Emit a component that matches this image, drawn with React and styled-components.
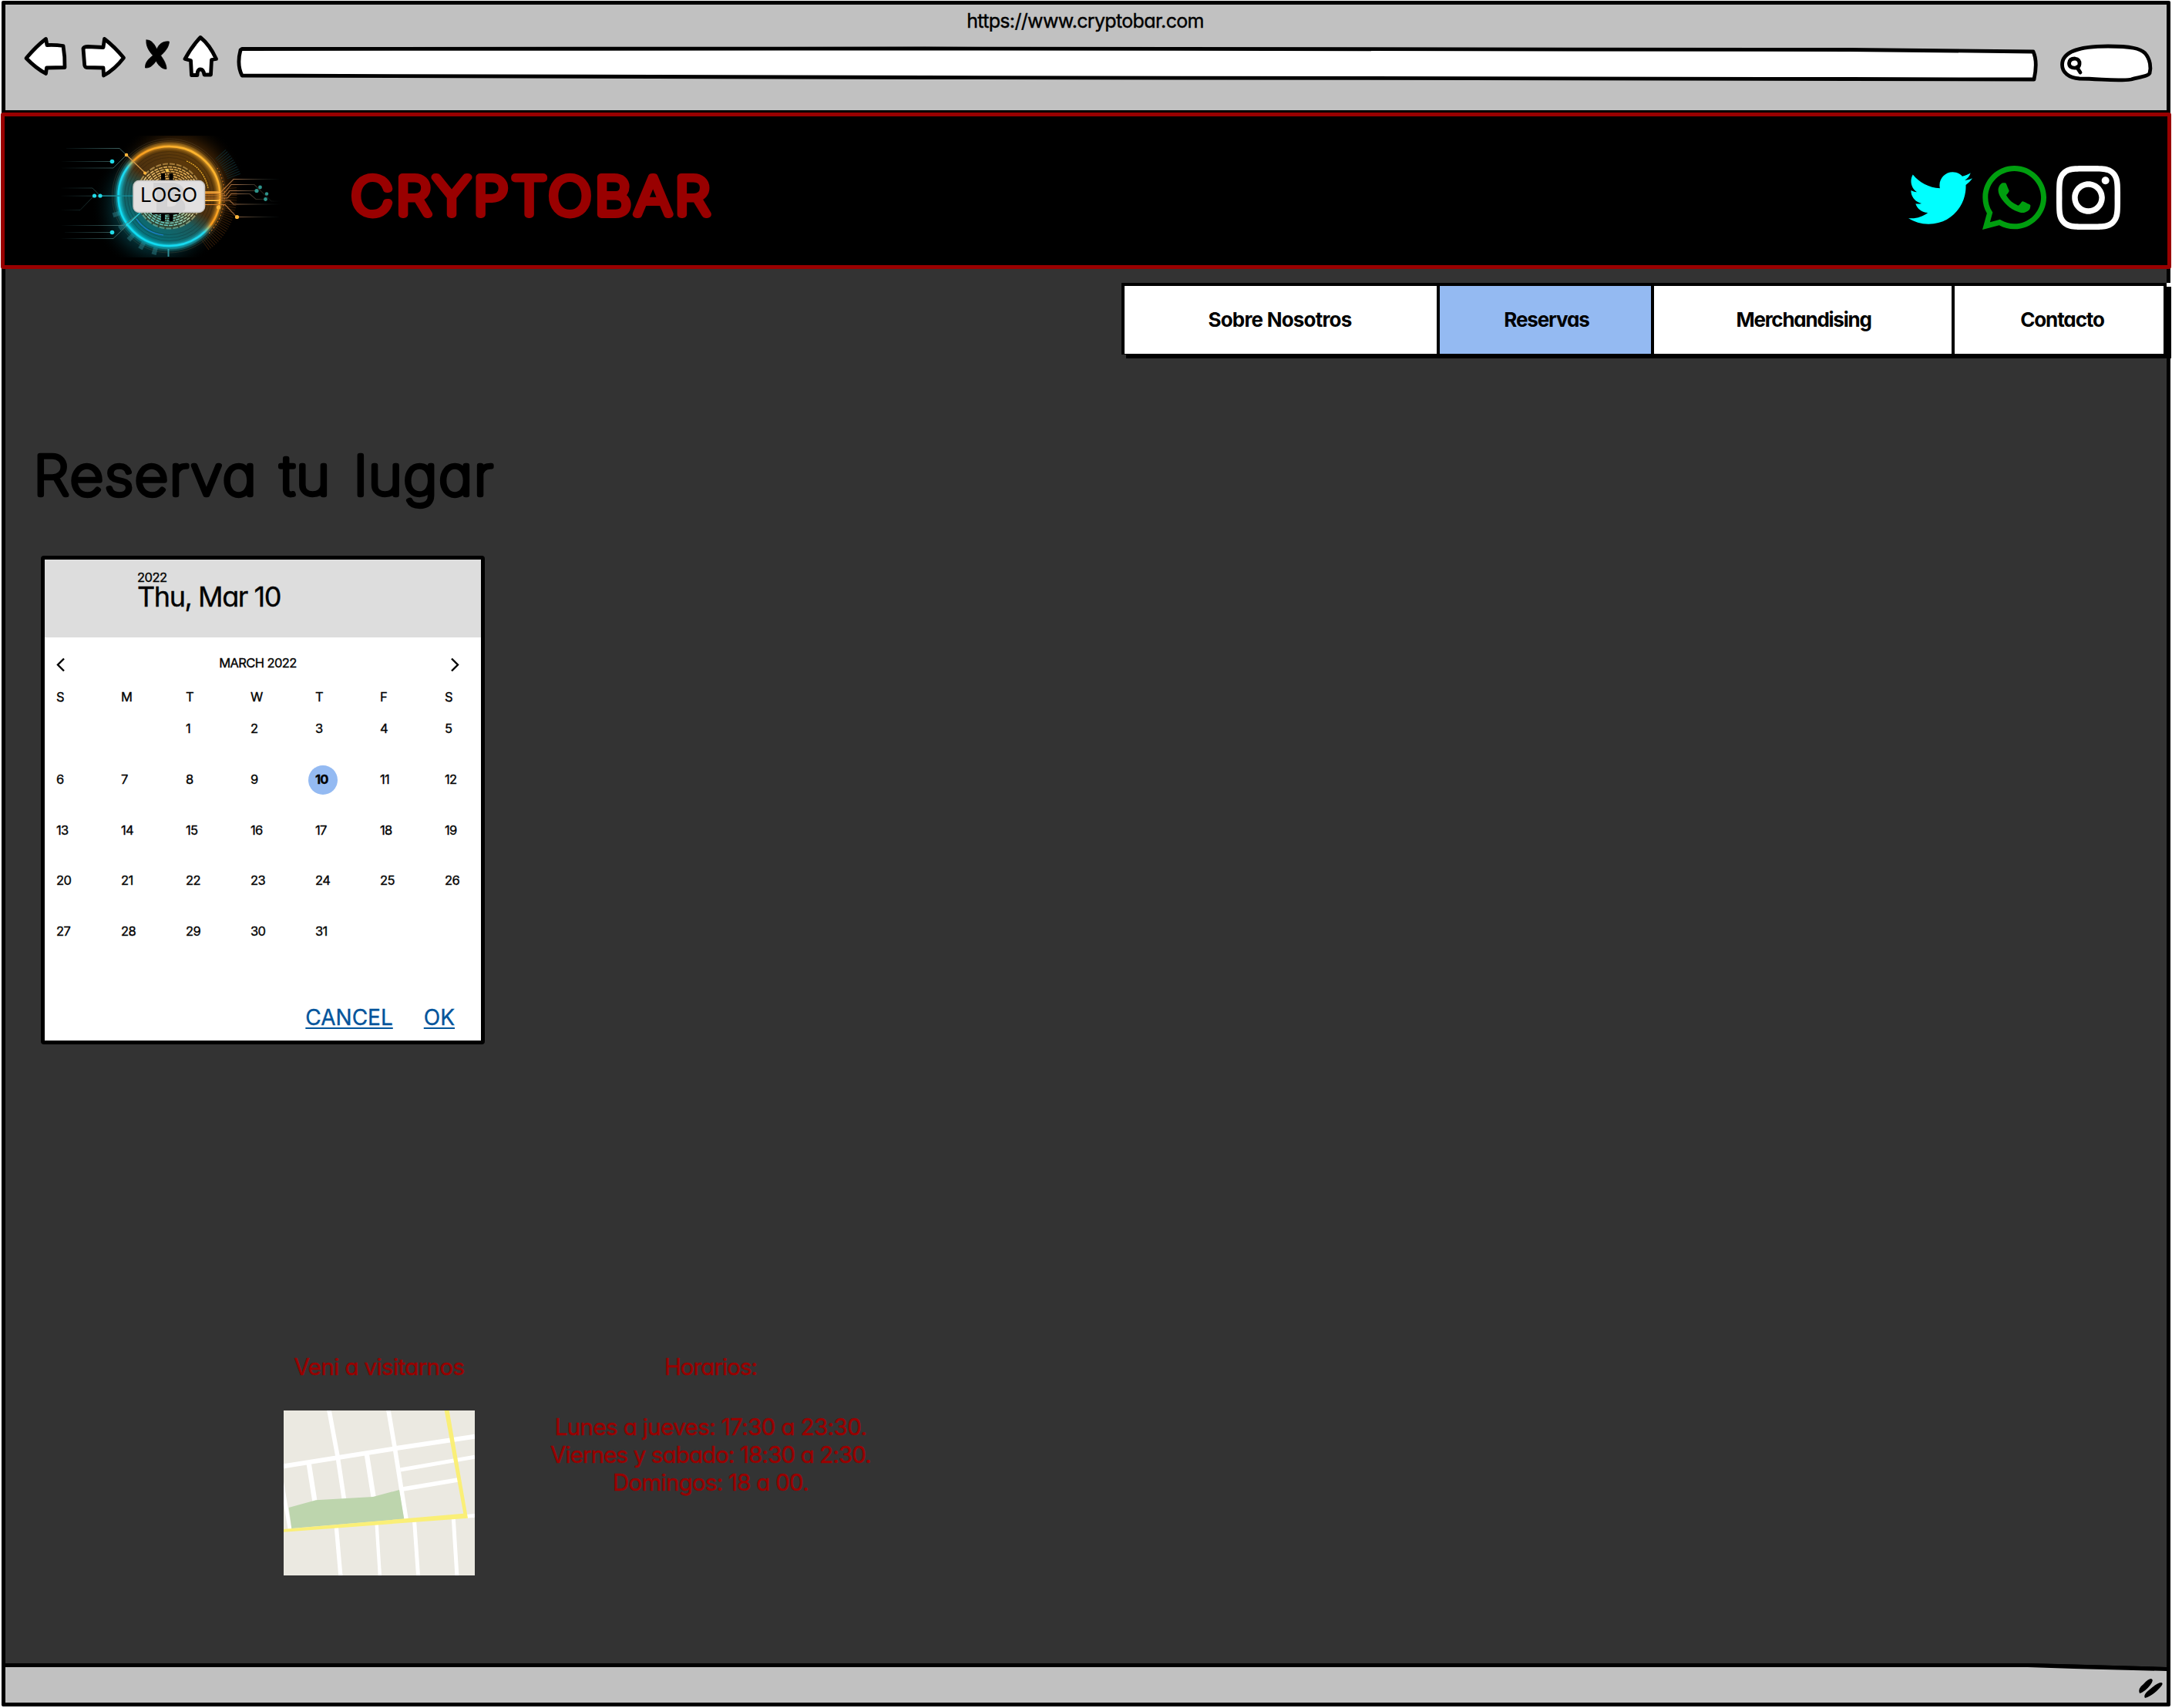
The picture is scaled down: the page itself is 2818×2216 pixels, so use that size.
import React from "react";
import styled, { createGlobalStyle } from "styled-components";
import { FaTwitter, FaWhatsapp, FaInstagram } from "react-icons/fa";

const GlobalStyle = createGlobalStyle`
  * { box-sizing: border-box; }
  body {
    margin: 0;
    background: #fff;
    color: #000;
    font-family: Inter, "Liberation Sans", sans-serif;
    font-feature-settings: "cv11";
  }
`;

const Page = styled.div`
  width: 2818px;
  height: 2216px;
  padding: 1px 2px 2px;
  overflow: hidden;
`;

const Window = styled.div`
  display: flex;
  flex-direction: column;
  height: 2213px;
  border: 5px solid #000;
  border-radius: 2px;
  background: #333;
`;

const BrowserBar = styled.div`
  flex: none;
  height: 140px;
  background: #c1c1c1;
  border-bottom: 3px solid #000;
`;

const Address = styled.div`
  height: 38px;
  padding: 6px 2px 0 0;
  font-size: 25px;
  line-height: 30px;
  letter-spacing: -0.66px;
  -webkit-text-stroke: 0.4px #000;
  text-align: center;
`;

const Controls = styled.div`
  display: flex;
  padding-left: 21px;
`;

const Sketch = styled.svg`
  display: block;
  flex: none;
  fill: #fff;
  stroke: #000;
  stroke-width: 4.8;
  stroke-linejoin: round;
  stroke-linecap: round;
`;

const Header = styled.header`
  flex: none;
  display: flex;
  align-items: flex-start;
  height: 203px;
  margin: 0 -6px;
  padding: 19px 61px 0 70px;
  border: 5px solid #990000;
  border-radius: 3px;
  background: #000;
`;

const Drawing = styled.svg`
  display: block;
  flex: none;
`;

const Wordmark = styled.svg`
  display: block;
  flex: none;
  margin: ${(p) => p.$margin};
  fill: ${(p) => p.$color};
  stroke: ${(p) => p.$color};
  stroke-width: ${(p) => p.$stroke};
  stroke-linejoin: round;
  stroke-linecap: round;
  font-weight: 100;
  letter-spacing: ${(p) => p.$tracking}px;
  word-spacing: 6px;
  overflow: visible;
`;

const Social = styled.div`
  display: flex;
  align-items: center;
  gap: 13px;
  margin: 39px 0 0 auto;
`;

const SocialIcon = styled.span`
  display: flex;
  color: ${(p) => p.$color};
  svg {
    display: block;
    width: 83px;
    height: ${(p) => p.$height};
  }
`;

const Nav = styled.nav`
  flex: none;
  display: flex;
  align-self: flex-end;
  height: 93px;
  margin-top: 18px;
  border: solid #000;
  border-width: 4px 4px 1px;
  background: #fff;
  box-shadow: 6px 5px 0 #000, 6px 0 0 #fff;
`;

const NavItem = styled.a`
  display: flex;
  align-items: center;
  justify-content: center;
  width: ${(p) => p.$width}px;
  padding: 0 ${(p) => p.$right || 0}px 1px ${(p) => p.$left || 0}px;
  background: ${(p) => (p.$active ? "#94baf2" : "#fff")};
  font-size: 26px;
  font-weight: 700;
  line-height: 30px;
  letter-spacing: ${(p) => p.$tracking}px;
  & + & {
    border-left: 4px solid #000;
  }
`;

const Calendar = styled.section`
  flex: none;
  width: 576px;
  height: 634px;
  margin: 51px 0 0 46px;
  border: 5px solid #000;
  border-radius: 4px;
  background: #fff;
  -webkit-text-stroke: 0.35px currentColor;
`;

const CalendarHead = styled.div`
  height: 101px;
  padding: 15px 0 0 120px;
  background: #ddd;
`;

const Year = styled.div`
  font-size: 16.5px;
  line-height: 16px;
  letter-spacing: -0.5px;
`;

const Today = styled.div`
  font-size: 36px;
  line-height: 34px;
  letter-spacing: -1.45px;
`;

const MonthRow = styled.div`
  display: flex;
  justify-content: space-between;
  height: 24px;
  margin: 23px 26px 0 13px;
  font-size: 16.5px;
  line-height: 20px;
  letter-spacing: -0.6px;
`;

const Grid = styled.div`
  display: grid;
  grid-template-columns: repeat(7, 84px);
  grid-auto-rows: ${(p) => p.$row}px;
  width: 566px;
  padding-left: 15px;
  margin-top: ${(p) => p.$top}px;
  font-size: 16.5px;
  line-height: 20px;
`;

const Day = styled.span`
  position: relative;
  isolation: isolate;
  font-weight: ${(p) => (p.$selected ? 700 : 400)};
  letter-spacing: ${(p) => (p.$selected ? "-0.8px" : "-0.6px")};
  &::before {
    content: "";
    display: ${(p) => (p.$selected ? "block" : "none")};
    position: absolute;
    z-index: -1;
    left: -9.5px;
    top: -7.5px;
    width: 38px;
    height: 38px;
    border-radius: 50%;
    background: #94baf2;
  }
`;

const Actions = styled.div`
  display: flex;
  justify-content: flex-end;
  gap: 40px;
  margin-top: 41px;
  padding-right: 34px;
`;

const Action = styled.a`
  color: #03549b;
  font-size: 28px;
  line-height: 30px;
  text-decoration: underline;
  text-decoration-thickness: 2px;
  text-underline-offset: 3px;
  text-decoration-skip-ink: none;
`;

const Visit = styled.footer`
  flex: none;
  display: flex;
  gap: 96px;
  margin: 400px 0 0 361px;
  color: #990000;
  font-size: 29.5px;
  line-height: 36px;
  text-align: center;
  -webkit-text-stroke: 0.5px #990000;
`;

const Column = styled.div`
  width: ${(p) => p.$width}px;
`;

const ColumnTitle = styled.div`
  margin-bottom: ${(p) => p.$gap}px;
  letter-spacing: ${(p) => p.$tracking}px;
`;

const Hours = styled.div`
  white-space: nowrap;
  letter-spacing: ${(p) => p.$tracking}px;
`;

const StatusBar = styled.div`
  position: relative;
  flex: none;
  height: 51px;
  margin-top: auto;
  border-top: 5px solid #000;
  background: #c1c1c1;
`;

const Corner = styled.svg`
  position: absolute;
  right: 0;
  top: -5px;
  display: block;
`;

const DAYS = ["", "", ...Array.from({ length: 31 }, (_, i) => String(i + 1))];
const WEEKDAYS = ["S", "M", "T", "W", "T", "F", "S"];

const HOURS = [
  ["Lunes a jueves: 17:30 a 23:30.", -0.6],
  ["Viernes y sabado: 18:30 a 2:30.", -0.88],
  ["Domingos: 18 a 00.", -0.75],
];

function BrowserControls() {
  return (
    <Controls>
      <Sketch width="69" height="66" viewBox="28 44 69 66">
        <path d="M34 75.5 Q47 60 59.5 50.500 L61 58.500 Q72 58 82 59.500 Q84.500 74 84 87.500 L60.500 88 L59.500 95.500 Q46 88 34 75.500Z" />
      </Sketch>
      <Sketch width="78" height="66" viewBox="97 44 78 66">
        <path d="M108 63 Q109 60.500 114 60.500 L134 61.500 L135.500 50.500 Q149 61 160.500 75 Q149 90 134.500 98 L134 88 L112 87.500 Q109.500 87 109.500 82Z" />
      </Sketch>
      <Sketch width="54" height="66" viewBox="175 44 54 66">
        <path
          d="M190 52 C196 51 201 58 203.500 64 C206 57 212 53 219.500 54 C219 62 213 68 208.500 72 C212 77 216 83 216 89.500 C210 90 205 84 202.500 79 C199 84 195 88.500 188.500 88 C188 81 193 76 198.500 72 C193 66 189 59 190 52Z"
          fill="#000"
          strokeWidth="0.8"
        />
      </Sketch>
      <Sketch width="66" height="66" viewBox="229 44 66 66">
        <path d="M260 48.500 Q249 60 240 76.500 L247.500 78.500 L248.500 97.500 H256 Q256 90 260 90 Q264 90 265 97 H273.500 L274.500 77.500 L280.500 76.500 Q272 58 260 48.500Z" />
      </Sketch>
      <Sketch width="2365" height="66" viewBox="295 44 2365 66">
        <path d="M314 63.500 L1200 63 L2400 64.500 L2638 67 Q2644 80 2639 103 L2400 102.500 L1200 100.500 L314 98 Q307 84 312 65Z" />
      </Sketch>
      <Sketch width="140" height="66" viewBox="2660 44 140 66">
        <path d="M2675.500 84 C2675.500 68 2696 60 2735 60 C2765 60 2777 63 2783 69 C2790 77 2791 88 2789 95 C2787 99 2775 100 2765 103 C2745 106 2725 102 2698 102 C2684 101 2675.500 94 2675.500 84Z" />
        <path d="M2684.500 82 Q2685 76 2692 76 Q2698.500 77 2698 83 Q2697.500 88 2693 88 Q2684.500 88.500 2684.500 82Z M2694.500 87 L2699 94" />
      </Sketch>
    </Controls>
  );
}

function Logo() {
  return (
    <Drawing width="292" height="166" viewBox="76 170 292 166">
      <defs>
        <linearGradient id="ring" x1="0.2" y1="0.85" x2="0.8" y2="0.15">
          <stop offset="0" stopColor="#10dcf2" />
          <stop offset="0.44" stopColor="#20d8ee" />
          <stop offset="0.56" stopColor="#f79a1c" />
          <stop offset="1" stopColor="#ffb52e" />
        </linearGradient>
        <linearGradient id="disc" x1="0.2" y1="0.9" x2="0.7" y2="0.15">
          <stop offset="0" stopColor="#05727c" />
          <stop offset="0.42" stopColor="#1b5a5b" />
          <stop offset="0.6" stopColor="#4b3010" />
          <stop offset="1" stopColor="#5c390a" />
        </linearGradient>
        <linearGradient id="coin" x1="0.3" y1="1" x2="0.6" y2="0">
          <stop offset="0" stopColor="#58c9c6" />
          <stop offset="0.4" stopColor="#ecd594" />
          <stop offset="1" stopColor="#e0a850" />
        </linearGradient>
        <radialGradient id="haloWarm">
          <stop offset="0.45" stopColor="#b8690f" stopOpacity="0.55" />
          <stop offset="0.7" stopColor="#6a3b08" stopOpacity="0.4" />
          <stop offset="1" stopColor="#000" stopOpacity="0" />
        </radialGradient>
        <radialGradient id="haloCold">
          <stop offset="0.45" stopColor="#07909f" stopOpacity="0.55" />
          <stop offset="0.7" stopColor="#064b54" stopOpacity="0.4" />
          <stop offset="1" stopColor="#000" stopOpacity="0" />
        </radialGradient>
        <linearGradient id="fadeLeft" gradientUnits="userSpaceOnUse" x1="78" y1="0" x2="170" y2="0">
          <stop offset="0" stopColor="#3d8085" stopOpacity="0" />
          <stop offset="1" stopColor="#55807c" />
        </linearGradient>
        <linearGradient id="fadeRight" gradientUnits="userSpaceOnUse" x1="270" y1="0" x2="364" y2="0">
          <stop offset="0" stopColor="#f08a24" />
          <stop offset="0.4" stopColor="#8c6140" />
          <stop offset="1" stopColor="#254043" stopOpacity="0" />
        </linearGradient>
        <filter id="glow" x="-20%" y="-20%" width="140%" height="140%">
          <feGaussianBlur stdDeviation="2.6" />
        </filter>
        <clipPath id="frame">
          <rect x="76" y="176" width="292" height="158" />
        </clipPath>
      </defs>
      <g clipPath="url(#frame)">
        <circle cx="230" cy="242" r="88" fill="url(#haloWarm)" />
        <circle cx="206" cy="268" r="88" fill="url(#haloCold)" />
        <g fill="none" stroke="#8b7a58" strokeWidth="0.7" opacity="0.3">
          <circle cx="219.500" cy="254" r="69" />
          <circle cx="219.500" cy="254" r="71.500" />
          <circle cx="219.500" cy="254" r="74" />
        </g>
        <path d="M266 318 A80 80 0 0 0 299 244" fill="none" stroke="#6b3a10" strokeWidth="16" strokeDasharray="1 2" opacity="0.45" />
        <path d="M286 200 A86 86 0 0 1 304 230" fill="none" stroke="#124047" strokeWidth="18" strokeDasharray="1 2" opacity="0.6" />
        <path d="M150 275 A74 74 0 0 0 205 327" fill="none" stroke="#277078" strokeWidth="9" strokeDasharray="6 12" opacity="0.6" />
        <path d="M282 218 A71 71 0 0 1 270 304" fill="none" stroke="#d26a16" strokeWidth="1.200" strokeDasharray="1.500 3" />
        <path d="M218.500 323 V333" stroke="#2f8d95" strokeWidth="2" />
        <circle cx="219.500" cy="254.500" r="65" fill="url(#disc)" />
        <g fill="none" stroke="#000" strokeWidth="1" opacity="0.2">
          <circle cx="219.500" cy="254.500" r="58" />
          <circle cx="219.500" cy="254.500" r="54" />
          <circle cx="219.500" cy="254.500" r="50" />
        </g>
        <circle cx="219.500" cy="254.500" r="43" fill="#4a3512" opacity="0.6" />
        <g fill="none" stroke="url(#coin)" strokeWidth="1.600">
          <circle cx="219.500" cy="254.500" r="42" strokeWidth="2" strokeDasharray="7 2" opacity="0.6" />
          {[38, 35, 32, 29, 26, 23, 20].map((r) => (
            <ellipse key={r} cx="219.500" cy="254.500" rx={r + 1} ry={r} strokeDasharray="5 1.200" />
          ))}
        </g>
        <path d="M242 209 Q264 218 270 244" fill="none" stroke="#f0b028" strokeWidth="1.200" strokeDasharray="2 1" />
        <path d="M177 284 Q189 302 212 305" fill="none" stroke="#1f7fd8" strokeWidth="1.200" />
        <circle cx="219.500" cy="254.500" r="65.500" fill="none" stroke="url(#ring)" strokeWidth="5" filter="url(#glow)" />
        <ellipse cx="219.500" cy="254.500" rx="66" ry="64.500" fill="none" stroke="url(#ring)" strokeWidth="2.500" />
        <g fill="none" stroke="url(#fadeLeft)" strokeWidth="0.900">
          <path d="M86 192.500 H155 L164 201" />
          <path d="M80 209.500 H145" />
          <path d="M80 218 H147 L164 201" />
          <path d="M77 244 H120 L130 254" />
          <path d="M77 254.200 H154" />
          <path d="M77 272.500 H104 L122 254" />
          <path d="M80 292.500 H160 L182 276" />
          <path d="M84 301.500 H145" />
          <path d="M80 309.500 H147 L180 278" />
        </g>
        <path d="M164 201 L188 224" stroke="#d59a48" strokeWidth="1.200" />
        <path d="M130 254.200 H174" stroke="#168e9b" strokeWidth="1.200" />
        <path d="M165 292 L182 276" stroke="#28cbd8" strokeWidth="1.200" />
        <g fill="none" stroke="url(#fadeRight)" strokeWidth="1.100">
          <path d="M266 249 H287 L303 232.500 H362" />
          <path d="M266 251.500 H290 L300 239.500 H330 L352 261 H364" />
          <path d="M266 254 H293 L298 247.500 H334" />
          <path d="M266 257 H295 L300 251.500 H324 L332 258.500 H344" />
          <path d="M266 260 H298 L303 265 H364" />
          <path d="M266 265.500 H292 L307 281.500 H362" />
          <path d="M266 249.500 H286 M266 260 H286" stroke="#ffae3c" strokeWidth="2" />
        </g>
        <g fill="#22dbe8">
          <circle cx="145.500" cy="209.500" r="2.800" />
          <circle cx="122.500" cy="254" r="2.600" />
          <circle cx="130" cy="254" r="2.600" />
          <circle cx="145.500" cy="301.500" r="2.800" />
          <circle cx="165" cy="292" r="1.600" />
        </g>
        <g fill="#ffb53a">
          <circle cx="164" cy="201" r="2.300" />
          <circle cx="188" cy="224.500" r="2" />
          <circle cx="283.500" cy="269" r="2.600" />
          <circle cx="307.500" cy="281.500" r="2.600" />
        </g>
        <g fill="#2f948c">
          <circle cx="333" cy="247.500" r="2.600" />
          <circle cx="337.500" cy="243" r="2.400" />
          <circle cx="346" cy="251.500" r="2.200" />
          <circle cx="344.500" cy="258.500" r="2.400" />
        </g>
        <path d="M209 225 H214 V287 H209Z M219.500 225 H224.500 V287 H219.500Z M197 275 H232 V278 H197Z" fill="#000" />
        <circle cx="217" cy="221" r="2" fill="#ffc84a" />
      </g>
      <rect x="173" y="234.500" width="92.500" height="41" rx="7.500" fill="#e2e0e0" stroke="#c6c4c2" strokeWidth="1.500" />
      <path
        d="M199 237 H226 Q240 240 239 251 Q238 256 234 258 Q242 263 240 272 L236 275 H203 V245 H199Z M217 258 V268 Q229 269 229 263 Q228 258 217 258Z"
        fill="#d3d2d3"
        fillRule="evenodd"
      />
      <text x="182" y="261.500" fontSize="25.500" textLength="74" lengthAdjust="spacingAndGlyphs">
        LOGO
      </text>
    </Drawing>
  );
}

function StreetMap() {
  return (
    <Drawing width="248" height="214" viewBox="12 12 744 642">
      <rect x="12" y="12" width="744" height="642" fill="#ebe9e1" />
      <g fill="none" stroke="#fff" strokeWidth="17">
        <path d="M12 229 L445 160 L756 113" strokeWidth="18" />
        <path d="M188 6 L222 190 L247 356" />
        <path d="M419 6 L445 160 L489 436" />
        <path d="M110 218 L133 364" strokeWidth="19" />
        <path d="M335 180 L362 350" strokeWidth="19" />
        <path d="M466 243 L756 193" strokeWidth="15" />
        <path d="M476 318 L690 282" strokeWidth="16" />
        <path d="M5 290 L36 474" strokeWidth="14" />
        <path d="M217 466 L234 660" strokeWidth="16" />
        <path d="M374 456 L387 660" strokeWidth="13" />
        <path d="M521 446 L536 660" strokeWidth="15" />
        <path d="M673 434 L687 660" strokeWidth="15" />
        <path d="M722 424 L756 421" strokeWidth="14" />
      </g>
      <path d="M32 390 L138 361 L360 348 L462 321 L481 434 L43 471Z" fill="#bdd5ad" />
      <path d="M12 474 L712 413 L638 12 H656 L729 431 L12 485Z" fill="#faef77" />
    </Drawing>
  );
}

export default function App() {
  return (
    <Page>
      <GlobalStyle />
      <Window>
        <BrowserBar>
          <Address>https://www.cryptobar.com</Address>
          <BrowserControls />
        </BrowserBar>
        <Header>
          <Logo />
          <Wordmark
            width="490"
            height="90"
            viewBox="446 210 490 90"
            $margin="40px 0 0 78px"
            $color="#990000"
            $stroke={9.8}
            $tracking={4.5}
          >
            <text x="456" y="278" fontSize="66" textLength="470" lengthAdjust="spacingAndGlyphs">
              CRYPTOBAR
            </text>
          </Wordmark>
          <Social>
            <SocialIcon $color="#00ffff" $height="84px">
              <FaTwitter />
            </SocialIcon>
            <SocialIcon $color="#009e0f" $height="95px">
              <FaWhatsapp />
            </SocialIcon>
            <SocialIcon $color="#ffffff" $height="95px">
              <FaInstagram />
            </SocialIcon>
          </Social>
        </Header>
        <Nav>
          <NavItem $width={405} $right={2} $tracking={-0.8}>
            Sobre Nosotros
          </NavItem>
          <NavItem $width={278} $left={3} $tracking={-1.1} $active>
            Reservas
          </NavItem>
          <NavItem $width={390} $left={2} $tracking={-1.25}>
            Merchandising
          </NavItem>
          <NavItem $width={275} $left={8} $tracking={-1.1}>
            Contacto
          </NavItem>
        </Nav>
        <Wordmark
          width="620"
          height="100"
          viewBox="40 570 620 100"
          $margin="110px 0 0 33px"
          $color="#000"
          $stroke={6.4}
          $tracking={2}
        >
          <text x="43.500" y="641.500" fontSize="70" textLength="598" lengthAdjust="spacingAndGlyphs">
            Reserva tu lugar
          </text>
        </Wordmark>
        <Calendar>
          <CalendarHead>
            <Year>2022</Year>
            <Today>Thu, Mar 10</Today>
          </CalendarHead>
          <MonthRow>
            <svg width="16" height="24" viewBox="0 0 16 24" fill="none" stroke="#000" strokeWidth="2.400">
              <path d="M12 4.500 L4 12.500 L12 20.500" />
            </svg>
            <span>MARCH 2022</span>
            <svg width="16" height="24" viewBox="0 0 16 24" fill="none" stroke="#000" strokeWidth="2.400">
              <path d="M4 4.500 L12 12.500 L4 20.500" />
            </svg>
          </MonthRow>
          <Grid $row={20} $top={20}>
            {WEEKDAYS.map((d, i) => (
              <Day key={i}>{d}</Day>
            ))}
          </Grid>
          <Grid $row={65.8} $top={21}>
            {DAYS.map((d, i) => (
              <Day key={i} $selected={d === "10"}>
                {d}
              </Day>
            ))}
          </Grid>
          <Actions>
            <Action>CANCEL</Action>
            <Action>OK</Action>
          </Actions>
        </Calendar>
        <Visit>
          <Column $width={248}>
            <ColumnTitle $gap={39} $tracking={-0.62}>
              Veni a visitarnos
            </ColumnTitle>
            <StreetMap />
          </Column>
          <Column $width={420}>
            <ColumnTitle $gap={42} $tracking={-0.95}>
              Horarios:
            </ColumnTitle>
            {HOURS.map(([text, tracking]) => (
              <Hours key={text} $tracking={tracking}>
                {text}
              </Hours>
            ))}
          </Column>
        </Visit>
        <StatusBar>
          <Corner width="180" height="51" viewBox="0 0 180 51">
            <path d="M0 0 H180 V5 L0 0Z" fill="#333" />
            <path d="M0 0 L60 1.500 L180 5 V10 L60 7 L0 5Z" fill="#000" />
            <path d="M145 39 Q142 33 150 27 Q156 20 160 20 Q164 21 159 28 Q152 37 145 39Z" />
            <path d="M152 45 Q149 41 158 34 Q168 25 173 25 Q177 26 171 32 Q161 43 152 45Z" />
          </Corner>
        </StatusBar>
      </Window>
    </Page>
  );
}
